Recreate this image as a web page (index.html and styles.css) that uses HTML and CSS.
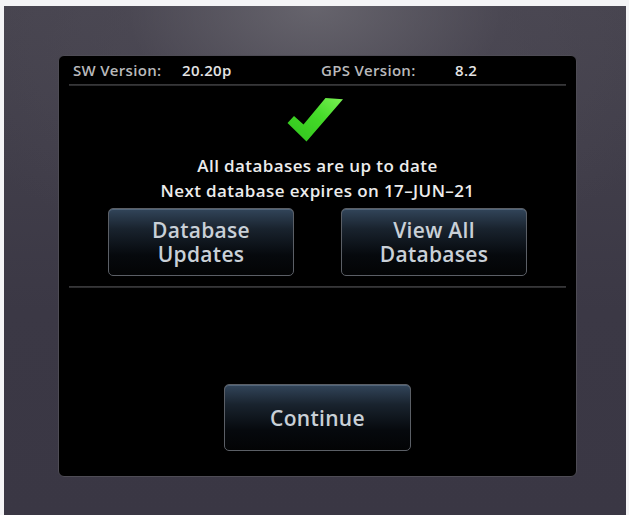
FILE: index.html
```html
<!DOCTYPE html>
<html>
<head>
<meta charset="utf-8">
<link rel="stylesheet" href="styles.css">
</head>
<body>
<div class="bezel">
  <div class="screen">
    <div class="header">
      <span class="label l1">SW Version:</span>
      <span class="value v1">20.20p</span>
      <span class="label l2">GPS Version:</span>
      <span class="value">8.2</span>
    </div>
    <div class="rule"></div>
    <div class="check">
      <svg width="60" height="50" viewBox="0 0 60 50">
        <defs>
          <linearGradient id="g" x1="0" y1="1" x2="1" y2="0">
            <stop offset="0" stop-color="#2fc21c"/>
            <stop offset="0.6" stop-color="#46dc2a"/>
            <stop offset="1" stop-color="#7cf055"/>
          </linearGradient>
          <filter id="blur"><feGaussianBlur stdDeviation="0.6"/></filter>
        </defs>
        <polygon points="8,20 17.5,28.5 39.5,2 57,3.2 20.5,45.5 1.5,27" fill="url(#g)" filter="url(#blur)"/>
      </svg>
    </div>
    <div class="msg">
      <div>All databases are up to date</div>
      <div>Next database expires on 17–JUN–21</div>
    </div>
    <div class="buttons">
      <div class="btn"><div class="btext"><span class="ln">Database</span><span class="ln">Updates</span></div></div>
      <div class="btn"><div class="btext"><span class="ln">View All</span><span class="ln">Databases</span></div></div>
    </div>
    <div class="rule rule2"></div>
    <div class="bottom">
      <div class="btn cont"><span>Continue</span></div>
    </div>
  </div>
</div>
</body>
</html>
```

FILE: styles.css
```css
html, body {
  margin: 0;
  padding: 0;
  background: #f4f4f6;
}
body {
  width: 629px;
  height: 515px;
  overflow: hidden;
  font-family: "Open Sans", "DejaVu Sans", sans-serif;
}
.bezel {
  margin: 6px 0 0 4px;
  width: 622px;
  height: 509px;
  box-sizing: border-box;
  padding: 49px 0 0 54px;
  background:
    radial-gradient(ellipse 420px 260px at 50% 0%, rgba(110,108,116,0.8) 0%, rgba(80,77,88,0.45) 45%, rgba(60,57,69,0) 100%),
    linear-gradient(#46434e, #3b3845 60%, #3a3744);
}
.screen {
  width: 519px;
  height: 422px;
  box-sizing: border-box;
  background: #000;
  border-radius: 6px;
  border: 1px solid #4e4c55;
  display: flex;
  flex-direction: column;
}
.header {
  height: 28px;
  display: flex;
  align-items: center;
  padding-left: 14px;
  font-size: 15px;
  font-weight: 600;
  letter-spacing: 0.3px;
}
.label { color: #b9b9bb; }
.value { color: #e4e4e4; }
.l1 { width: 109px; }
.v1 { width: 139px; }
.l2 { width: 134px; }
.rule {
  height: 2px;
  margin: 0 10px;
  background: linear-gradient(#3c3c3e, #262628);
}
.check {
  margin-top: 10px;
  height: 50px;
  display: flex;
  justify-content: center;
  padding-right: 4px;
}
.msg {
  margin-top: 7px;
  text-align: center;
  color: #ececec;
  font-size: 17px;
  font-weight: 600;
  line-height: 25px;
  letter-spacing: 0.4px;
}
.buttons {
  margin-top: 5px;
  display: flex;
  justify-content: center;
  gap: 47px;
}
.btn {
  width: 186px;
  height: 68px;
  box-sizing: border-box;
  border: 1.5px solid #5b5f66;
  border-radius: 5px;
  background: linear-gradient(#32455a 0%, #19232e 30%, #06090d 70%, #030405 100%);
  box-shadow: inset 0 1px 0 rgba(140,160,180,0.35);
  display: flex;
  align-items: center;
  justify-content: center;
  text-align: center;
  color: #c9d0d7;
  font-size: 21px;
  font-weight: 600;
  letter-spacing: 0.3px;
}
.btext {
  display: flex;
  flex-direction: column;
  align-items: center;
}
.ln {
  display: block;
  height: 24px;
  line-height: 24px;
}
.rule2 {
  margin-top: 10px;
}
.bottom {
  margin-top: 96px;
  display: flex;
  justify-content: center;
}
.cont {
  width: 187px;
  height: 67px;
  font-size: 21px;
}
```
